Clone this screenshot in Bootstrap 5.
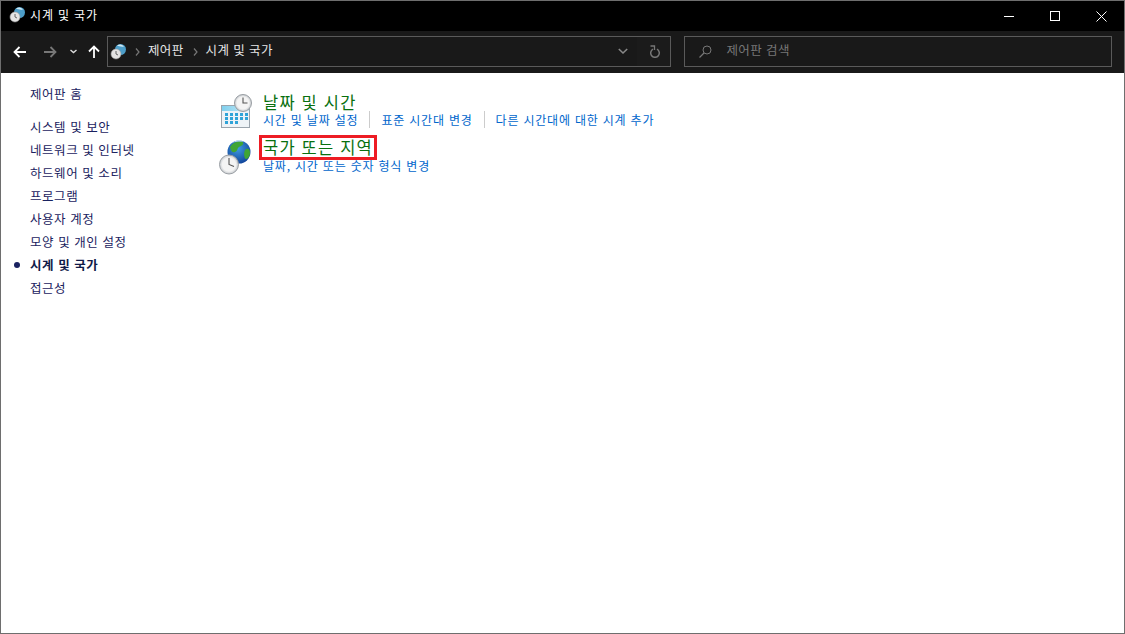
<!DOCTYPE html>
<html lang="ko">
<head>
<meta charset="utf-8">
<title>시계 및 국가</title>
<link href="https://cdn.jsdelivr.net/npm/bootstrap@5.3.0/dist/css/bootstrap.min.css" rel="stylesheet">
<style>
html,body{height:100%;margin:0;overflow:hidden}
body{font-family:"Noto Sans CJK KR","Liberation Sans",sans-serif;font-size:13px;background:#fff}
.win{width:1125px;height:634px;border:1px solid #6e6e6e}
.tbar{height:30px;background:#000;color:#fff;font-size:12px;padding-left:8px}
.tbar-title{margin-left:4px;letter-spacing:.85px;padding-bottom:2px}
.winbtns{width:138px}
.winbtn{width:46px;height:28px}
.tool{height:42px;background:#191919;padding:5px 12px 6px 0}
.navs{width:106px;padding-left:12px;height:31px}
.addr{width:565px;height:31px;border:1px solid #5a5a5a;color:#e6e6e6;padding-left:2px;font-size:12.5px}
.srch{width:428px;height:31px;border:1px solid #5a5a5a;margin-left:13px;color:#777;padding-left:14px;font-size:12.5px}
.lbl{padding-bottom:2px;letter-spacing:.4px}
.addr-ico{margin-left:auto}
.refresh{width:33px;background:#1b1b1b;height:29px;margin-left:9px;padding-left:3px}
.side{width:218px;padding-top:9px;padding-left:14px;position:relative}
.side a{display:block;color:#1a2260;text-decoration:none;line-height:23px;padding-left:15px;font-size:12.5px;letter-spacing:.55px}
.side a.home{margin-bottom:10px}
.side a.cur{font-weight:700;color:#101a48}
.dot{display:inline-block;width:6px;height:6px;border-radius:50%;background:#1a2260;position:absolute;left:13px;margin-top:9px}
.main{padding-top:17px}
.cat{display:flex;height:45px}
.cat-ico{width:44px;flex:none}
.cat h2{font-size:16.5px;line-height:24px;height:24px;margin:0;color:#08700f;font-weight:400;letter-spacing:1.2px}
.subs{font-size:12px;line-height:15px;margin-top:-2px;color:#0066cc;letter-spacing:.8px}
.subs a{color:#0066cc;text-decoration:none;padding-right:11px;margin-right:11px;border-right:1px solid #ccc}
.subs a:last-child{border:0}
.hl{display:inline-block;border:3px solid #ed1c24;padding:0 1px;margin:-3px 0 0 -4px;line-height:19px;height:25px;position:relative}
.cat2 .cat-ico{padding-top:3px}
.cat2 .subs{margin-top:-1px}
</style>
</head>
<body>
<div class="win d-flex flex-column">
  <div class="tbar d-flex align-items-center">
    <svg width="17" height="17" viewBox="0 0 17 17" class="mb-1"><circle cx="10.500" cy="6.500" r="5.500" fill="#4d9ec9"/><path d="M7 2.500a5.500 5.500 0 0 1 7 1c-2 .5-5 0-7-1z" fill="#cfe8f2"/><circle cx="6" cy="11" r="5" fill="#e4e4e4" stroke="#999" stroke-width=".6"/><path d="M6 8v3l2 1" stroke="#444" fill="none" stroke-width=".8"/></svg>
    <span class="tbar-title">시계 및 국가</span>
    <div class="winbtns ms-auto d-flex">
      <div class="winbtn d-flex align-items-center justify-content-center"><svg width="10" height="10"><path d="M0 5.500h10" stroke="#fff"/></svg></div>
      <div class="winbtn d-flex align-items-center justify-content-center"><svg width="10" height="10"><rect x=".5" y=".5" width="9" height="9" fill="none" stroke="#fff"/></svg></div>
      <div class="winbtn d-flex align-items-center justify-content-center"><svg width="11" height="11"><path d="M.5.5l10 10M10.500.5l-10 10" stroke="#fff"/></svg></div>
    </div>
  </div>
  <div class="tool d-flex">
    <div class="navs d-flex align-items-center">
      <svg width="13" height="12" viewBox="0 0 13 12"><path d="M13 6H1.500M6.500 1 1.500 6l5 5" stroke="#fff" stroke-width="1.800" fill="none"/></svg>
      <svg style="margin-left:18px" width="13" height="12" viewBox="0 0 13 12"><path d="M0 6h11.500M6.500 1l5 5-5 5" stroke="#777" stroke-width="1.800" fill="none"/></svg>
      <svg style="margin-left:13px" width="7" height="5" viewBox="0 0 7 5"><path d="M.5 1l3 2.500 3-2.500" stroke="#ddd" stroke-width="1.400" fill="none"/></svg>
      <svg style="margin-left:11px" width="12" height="13" viewBox="0 0 12 13"><path d="M6 13V1.500M1 6.500l5-5 5 5" stroke="#fff" stroke-width="1.800" fill="none"/></svg>
    </div>
    <div class="addr d-flex align-items-center">
      <svg width="17" height="17" viewBox="0 0 17 17"><circle cx="10.500" cy="6.500" r="5.500" fill="#4d9ec9"/><path d="M7 2.500a5.500 5.500 0 0 1 7 1c-2 .5-5 0-7-1z" fill="#cfe8f2"/><circle cx="6" cy="11" r="5" fill="#e4e4e4" stroke="#999" stroke-width=".6"/><path d="M6 8v3l2 1" stroke="#444" fill="none" stroke-width=".8"/></svg>
      <svg class="ms-2" width="5" height="8" viewBox="0 0 5 8"><path d="M1 .5 4 4 1 7.500" stroke="#777" stroke-width="1.200" fill="none"/></svg>
      <span class="lbl" style="margin-left:8px">제어판</span>
      <svg style="margin-left:9px" width="5" height="8" viewBox="0 0 5 8"><path d="M1 .5 4 4 1 7.500" stroke="#777" stroke-width="1.200" fill="none"/></svg>
      <span class="lbl" style="margin-left:8px">시계 및 국가</span>
      <svg class="addr-ico" width="10" height="7" viewBox="0 0 10 7"><path d="M.8 1 5 5l4.200-4" stroke="#888" stroke-width="1.600" fill="none"/></svg>
      <div class="refresh d-flex align-items-center justify-content-center"><svg width="11" height="13" viewBox="0 0 11 13"><path d="M7 4.200A4.300 4.300 0 1 1 3 4.200" stroke="#777" stroke-width="1.500" fill="none"/><path d="M.5 1H4.500V5" stroke="#777" stroke-width="1.300" fill="none"/></svg></div>
    </div>
    <div class="srch d-flex align-items-center">
      <svg width="13" height="13" viewBox="0 0 13 13"><circle cx="8" cy="5" r="4" fill="none" stroke="#777"/><path d="M5 8 .5 12.500" stroke="#777" stroke-width="1.200"/></svg>
      <span class="lbl" style="margin-left:14px">제어판 검색</span>
    </div>
  </div>
  <div class="d-flex flex-grow-1">
    <nav class="side">
      <a class="home" href="#">제어판 홈</a>
      <a href="#">시스템 및 보안</a>
      <a href="#">네트워크 및 인터넷</a>
      <a href="#">하드웨어 및 소리</a>
      <a href="#">프로그램</a>
      <a href="#">사용자 계정</a>
      <a href="#">모양 및 개인 설정</a>
      <span class="dot"></span><a class="cur" href="#">시계 및 국가</a>
      <a href="#">접근성</a>
    </nav>
    <div class="main flex-grow-1">
      <div class="cat">
        <div class="cat-ico"><svg width="36" height="40" viewBox="0 0 36 40"><defs><linearGradient id="calHead" x1="0" x2="1" y1="0" y2="0"><stop offset="0" stop-color="#7fd0ee"/><stop offset="1" stop-color="#c8e8f4"/></linearGradient><radialGradient id="clk1"><stop offset=".7" stop-color="#f4f4f4"/><stop offset="1" stop-color="#c4c8cc"/></radialGradient></defs><rect x="2.500" y="15.500" width="28" height="22" fill="#eef3f7" stroke="#9aa4ad"/><rect x="3" y="16" width="27" height="5" fill="url(#calHead)"/><g fill="#2fa3d8"><rect x="6" y="23" width="3" height="3"/><rect x="11" y="23" width="3" height="3"/><rect x="16" y="23" width="3" height="3"/><rect x="21" y="23" width="3" height="3"/><rect x="26" y="23" width="3" height="3"/><rect x="6" y="27" width="3" height="3"/><rect x="11" y="27" width="3" height="3"/><rect x="16" y="27" width="3" height="3"/><rect x="21" y="27" width="3" height="3"/><rect x="26" y="27" width="3" height="3"/><rect x="6" y="31" width="3" height="3"/><rect x="11" y="31" width="3" height="3"/><rect x="16" y="31" width="3" height="3"/></g><circle cx="24" cy="13" r="8.500" fill="url(#clk1)" stroke="#9a9fa4"/><path d="M24 7.500V13h4.500" stroke="#555" stroke-width="1.100" fill="none"/></svg></div>
        <div>
          <h2>날짜 및 시간</h2>
          <div class="subs"><a href="#">시간 및 날짜 설정</a><a href="#">표준 시간대 변경</a><a href="#">다른 시간대에 대한 시계 추가</a></div>
        </div>
      </div>
      <div class="cat cat2">
        <div class="cat-ico"><svg width="36" height="40" viewBox="0 0 36 40"><defs><radialGradient id="glb" cx=".45" cy=".35" r=".75"><stop offset="0" stop-color="#3f9be0"/><stop offset="1" stop-color="#0b3a92"/></radialGradient></defs><circle cx="20" cy="14" r="11.500" fill="url(#glb)"/><path d="M11 9c3-5 9-7 13-5 1 3-2 4-4 5s-1 4-4 5-4-1-5-5zM27 11c3-1 4 1 4 4s-2 6-4 6-3-8 0-10z" fill="#3fa535"/><path d="M13 5a11.500 11.500 0 0 1 13-1c-4-.8-9-.6-13 1z" fill="#d4ecfa"/><circle cx="10" cy="26.500" r="9.500" fill="url(#clk1)" stroke="#9a9fa4"/><path d="M10 20v6.500l5 2" stroke="#555" stroke-width="1.100" fill="none"/></svg></div>
        <div>
          <h2><span class="hl">국가 또는 지역</span></h2>
          <div class="subs"><a href="#">날짜, 시간 또는 숫자 형식 변경</a></div>
        </div>
      </div>
    </div>
  </div>
</div>
</body>
</html>
